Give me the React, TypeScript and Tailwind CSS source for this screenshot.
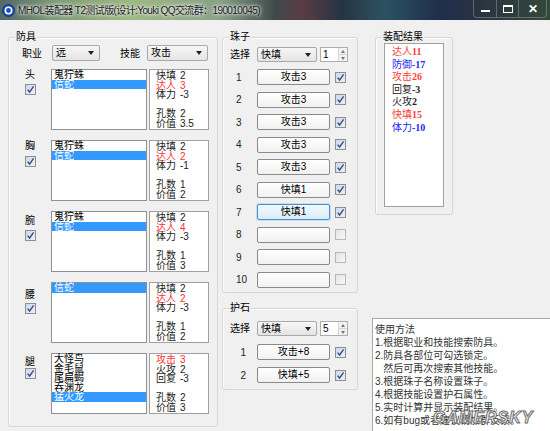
import React from 'react';

type Stat = [string, string, boolean?] | null;

function Check({ checked = true }: { checked?: boolean }) {
  return (
    <div
      className={
        checked
          ? 'w-[11px] h-[11px] border border-[#8e8f8f] bg-gradient-to-br from-[#cfd8e6] to-[#eef2f8] flex items-center justify-center'
          : 'w-[11px] h-[11px] border border-[#b8b8b8] bg-gradient-to-br from-[#e4e4e4] to-[#f8f8f8] flex items-center justify-center'
      }
    >
      {checked && (
        <svg width="9" height="9" viewBox="0 0 9 9">
          <path d="M1.6 4.6 L3.6 7 L7.6 1.4" stroke="#3b4f8c" strokeWidth="1.4" fill="none" />
        </svg>
      )}
    </div>
  );
}

function Combo({ value, className }: { value: string; className: string }) {
  return (
    <div
      className={`border border-[#a9a9a9] rounded-[2px] bg-gradient-to-b from-[#f7f7f7] to-[#e4e4e4] flex items-center pl-[3px] pr-[5px] leading-[12px] ${className}`}
    >
      <span>{value}</span>
      <div className="ml-auto w-0 h-0 border-l-[3px] border-r-[3px] border-t-[4px] border-l-transparent border-r-transparent border-t-[#222]" />
    </div>
  );
}

function Spin({ value, className }: { value: string; className: string }) {
  return (
    <div className={`border border-[#abadb3] bg-white flex ${className}`}>
      <span className="pl-[2px] leading-[13px]">{value}</span>
      <div className="ml-auto w-[9px] flex flex-col border-l border-[#d6d6d6]">
        <div className="flex-1 flex items-center justify-center bg-[#f2f2f2] border-b border-[#d6d6d6]">
          <div className="w-0 h-0 border-l-[2px] border-r-[2px] border-b-[3px] border-l-transparent border-r-transparent border-b-[#777]" />
        </div>
        <div className="flex-1 flex items-center justify-center bg-[#f2f2f2]">
          <div className="w-0 h-0 border-l-[2px] border-r-[2px] border-t-[3px] border-l-transparent border-r-transparent border-t-[#777]" />
        </div>
      </div>
    </div>
  );
}

function Btn({ text, focus = false }: { text: string; focus?: boolean }) {
  return (
    <div
      className={
        focus
          ? 'w-[73px] h-[16px] rounded-[2px] border border-[#4a8fc9] bg-gradient-to-b from-[#f2f9fe] to-[#dceefb] shadow-[0_0_0_1px_#bfe0f7] flex items-center justify-center leading-[12px]'
          : 'w-[73px] h-[16px] rounded-[2px] border border-[#8a8a8a] bg-gradient-to-b from-[#ffffff] to-[#f1f1f1] flex items-center justify-center leading-[12px]'
      }
    >
      {text}
    </div>
  );
}

function Group({ label, className, children }: { label: string; className: string; children?: React.ReactNode }) {
  return (
    <div className={`relative border border-[#d6d6d6] rounded-[3px] shadow-[inset_1px_1px_0_#ffffff] ${className}`}>
      <span className="absolute left-[6px] -top-[7px] px-[1px] bg-[#f0f0f0] leading-[12px] text-[10px]">{label}</span>
      {children}
    </div>
  );
}

const parts: {
  name: string;
  items: string[];
  sel: number;
  stats: Stat[];
  lm: string;
  cm: string;
}[] = [
  {
    name: '头',
    items: ['鬼狞蛛', '信蛇'],
    sel: 1,
    stats: [['快填', '2'], ['达人', '3', true], ['体力', '-3'], null, ['孔数', '2'], ['价值', '3.5']],
    lm: 'mt-[0px]',
    cm: 'mt-[3px]',
  },
  {
    name: '胸',
    items: ['鬼狞蛛', '信蛇'],
    sel: 1,
    stats: [['快填', '2'], ['达人', '2', true], ['体力', '-1'], null, ['孔数', '1'], ['价值', '2']],
    lm: 'mt-[0px]',
    cm: 'mt-[4px]',
  },
  {
    name: '腕',
    items: ['鬼狞蛛', '信蛇'],
    sel: 1,
    stats: [['快填', '2'], ['达人', '4', true], ['体力', '-3'], null, ['孔数', '1'], ['价值', '3']],
    lm: 'mt-[4px]',
    cm: 'mt-[3px]',
  },
  {
    name: '腰',
    items: ['信蛇'],
    sel: 0,
    stats: [['快填', '2'], ['达人', '2', true], ['体力', '-3'], null, ['孔数', '1'], ['价值', '2']],
    lm: 'mt-[7px]',
    cm: 'mt-[2px]',
  },
  {
    name: '腿',
    items: ['大怪鸟', '金毛鼠', '尾扁蝎', '吞渊龙', '猛火龙'],
    sel: 4,
    stats: [['攻击', '3', true], ['火攻', '2'], ['回复', '-3'], null, ['孔数', '2'], ['价值', '3']],
    lm: 'mt-[3px]',
    cm: 'mt-[0px]',
  },
];

const beads: { t: string; c: boolean }[] = [
  { t: '攻击3', c: true },
  { t: '攻击3', c: true },
  { t: '攻击3', c: true },
  { t: '攻击3', c: true },
  { t: '攻击3', c: true },
  { t: '快填1', c: true },
  { t: '快填1', c: true },
  { t: '', c: false },
  { t: '', c: false },
  { t: '', c: false },
];

const results: { k: string; v: string; c: string }[] = [
  { k: '达人', v: '11', c: 'text-[#ff3b3b]' },
  { k: '防御', v: '-17', c: 'text-[#2626f0]' },
  { k: '攻击', v: '26', c: 'text-[#ff3b3b]' },
  { k: '回复', v: '-3', c: 'text-[#222222]' },
  { k: '火攻', v: '2', c: 'text-[#222222]' },
  { k: '快填', v: '15', c: 'text-[#ff3b3b]' },
  { k: '体力', v: '-10', c: 'text-[#2626f0]' },
];

const usage = [
  '使用方法',
  '1.根据职业和技能搜索防具。',
  '2.防具各部位可勾选锁定。',
  '   然后可再次搜索其他技能。',
  '3.根据珠子名称设置珠子。',
  '4.根据技能设置护石属性。',
  '5.实时计算并显示装配结果。',
  '6.如有bug或者建议请加群反馈。',
];

export default function App() {
  return (
    <div className="w-[550px] h-[431px] overflow-hidden bg-[#f0f0f0] relative [font-family:'Liberation_Sans','Noto_Sans_CJK_SC',sans-serif] text-[10px] text-black">
      {/* Title bar */}
      <div className="h-[20px] flex items-center bg-[linear-gradient(90deg,#55686a_0%,#7f9a74_10%,#9fb884_24%,#8aa088_40%,#3f4a4a_50%,#5a3c44_55%,#263442_62%,#2c5262_70%,#1f2d4c_80%,#2a3540_88%,#33483a_100%)]">
        <svg className="ml-[2px]" width="13" height="13" viewBox="0 0 13 13">
          <circle cx="6.5" cy="6.5" r="6" fill="#1d4fb8" stroke="#0c2a6a" strokeWidth="0.8" />
          <circle cx="6.5" cy="6.5" r="3.2" fill="none" stroke="#ffffff" strokeWidth="1.5" />
        </svg>
        <span className="ml-[3px] text-[10px] tracking-[-0.6px] text-[#1c2228] whitespace-nowrap [text-shadow:0_0_5px_#ffffff,0_0_3px_#ffffff]">
          MHOL装配器 T2测试版(设计:Youki QQ交流群：190010045)
        </span>
        <div className="ml-auto flex h-[18px] self-start mr-[3px]">
          <div className="w-[24px] border border-[#ffffff40] border-t-0 rounded-bl-[4px] flex items-center justify-center">
            <div className="w-[9px] h-[2px] bg-white mt-[4px]" />
          </div>
          <div className="w-[22px] border-b border-r border-[#ffffff40] flex items-center justify-center">
            <div className="w-[10px] h-[8px] border border-white border-t-2" />
          </div>
          <div className="w-[28px] border-b border-r border-[#ffffff40] rounded-br-[4px] flex items-center justify-center text-white text-[12px] font-bold leading-none">
            ✕
          </div>
        </div>
      </div>

      {/* Body */}
      <div className="flex pt-[17px] pl-[8px]">
        {/* 防具 */}
        <Group label="防具" className="w-[210px] h-[390px] shrink-0">
          <div className="mt-[7px] h-[16px] pl-[13px] flex items-center">
            <span>职业</span>
            <Combo value="远" className="ml-[10px] w-[48px] h-[16px]" />
            <span className="ml-[20px]">技能</span>
            <Combo value="攻击" className="ml-[7px] w-[61px] h-[16px]" />
          </div>
          <div className="mt-[8px] flex flex-col gap-[10px]">
            {parts.map((p) => (
              <div key={p.name} className="h-[61px] pl-[13px] flex">
                <div className="w-[16px] flex flex-col items-center">
                  <span className={`leading-[12px] ${p.lm}`}>{p.name}</span>
                  <div className={p.cm}>
                    <Check />
                  </div>
                </div>
                <div className="ml-[13px] w-[96px] h-[61px] border border-[#8e9097] bg-white leading-[9.6px] whitespace-nowrap">
                  {p.items.map((it, i) => (
                    <div key={i} className={i === p.sel ? 'bg-[#3399ff] text-white pl-[2px]' : 'pl-[2px]'}>
                      {it}
                    </div>
                  ))}
                </div>
                <div className="ml-[2px] w-[60px] h-[61px] border border-[#a0a0a0] bg-white pl-[6px] pt-[1px] leading-[9.5px] whitespace-nowrap">
                  {p.stats.map((s, i) =>
                    s ? (
                      <div key={i} className={s[2] ? 'flex text-[#ff3030]' : 'flex text-[#222222]'}>
                        <span className="w-[24px]">{s[0]}</span>
                        <span>{s[1]}</span>
                      </div>
                    ) : (
                      <div key={i} className="h-[9.5px]" />
                    )
                  )}
                </div>
              </div>
            ))}
          </div>
        </Group>

        {/* 中间 */}
        <div className="ml-[4px] w-[136px] shrink-0 flex flex-col">
          <Group label="珠子" className="w-[136px] h-[256px]">
            <div className="mt-[9px] pl-[7px] flex items-center h-[15px]">
              <span>选择</span>
              <Combo value="快填" className="ml-[7px] w-[60px] h-[15px]" />
              <Spin value="1" className="ml-[3px] w-[28px] h-[15px]" />
            </div>
            <div className="mt-[4px] flex flex-col">
              {beads.map((b, i) => (
                <div key={i} className="h-[22.5px] pl-[13px] flex items-center">
                  <span className="w-[21px] text-[#222]">{i + 1}</span>
                  <Btn text={b.t} focus={i === 6} />
                  <div className="ml-[5px]">
                    <Check checked={b.c} />
                  </div>
                </div>
              ))}
            </div>
          </Group>
          <Group label="护石" className="mt-[15px] w-[136px] h-[82px]">
            <div className="mt-[12px] pl-[7px] flex items-center h-[15px]">
              <span>选择</span>
              <Combo value="快填" className="ml-[7px] w-[60px] h-[15px]" />
              <Spin value="5" className="ml-[3px] w-[28px] h-[15px]" />
            </div>
            <div className="mt-[4.5px] flex flex-col">
              {[
                { t: '攻击+8' },
                { t: '快填+5' },
              ].map((b, i) => (
                <div key={i} className="h-[23px] pl-[7px] flex items-center">
                  <span className="w-[16px] text-right text-[#222]">{i + 1}</span>
                  <div className="ml-[11px]">
                    <Btn text={b.t} />
                  </div>
                  <div className="ml-[5px]">
                    <Check />
                  </div>
                </div>
              ))}
            </div>
          </Group>
        </div>

        {/* 右侧 */}
        <div className="ml-[14px] w-[190px] shrink-0 flex flex-col">
          <Group label="装配结果" className="ml-[3px] w-[78px] h-[178px]">
            <div className="mt-[5px] ml-[8px] w-[60px] h-[164px] border border-[#a0a0a0] bg-white pl-[7px] pt-[2px] leading-[12.6px] whitespace-nowrap">
              {results.map((r, i) => (
                <div key={i} className={r.c}>
                  <span>{r.k}</span>
                  <span className="font-bold [font-family:'Liberation_Serif',serif]">{r.v}</span>
                </div>
              ))}
            </div>
          </Group>
          <div className="relative mt-[103px] w-[190px] h-[125px] border border-[#a8a8a8] bg-white pl-[2px] pt-[4px] leading-[13px] text-[#333333] whitespace-pre">
            {usage.map((u, i) => (
              <div key={i}>{u}</div>
            ))}
            <div className="absolute left-[60px] top-[91px] text-[16px] font-bold italic tracking-[1px] text-[#f4f4f4] [-webkit-text-stroke:1px_#6e6e6e] [font-family:'Liberation_Sans',sans-serif] leading-[16px]">
              GAMERSKY
            </div>
          </div>
        </div>
      </div>
    </div>
  );
}
